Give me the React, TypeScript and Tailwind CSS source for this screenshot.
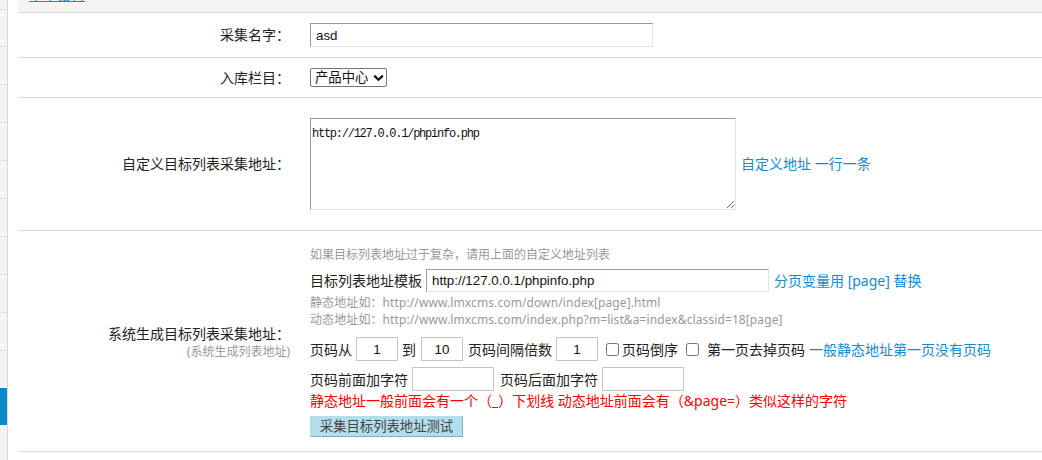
import React from "react";

const inputStrong =
  "border border-t-[#9a9a9a] border-l-[#9a9a9a] border-r-[#e3e3e3] border-b-[#e3e3e3] bg-white outline-none font-['Liberation_Sans',Arial,sans-serif] text-[13.33px] text-[#111]";
const inputLight =
  "border border-[#c4c4c4] bg-white outline-none font-['Liberation_Sans',Arial,sans-serif] text-[13.33px] text-[#111]";

function Sidebar() {
  return (
    <div className="w-[8px] h-full bg-[#f4f4f4] border-r border-[#d9d9d9] flex flex-col shrink-0">
      <div className="h-[10px] border-b border-[#dcdcdc]" />
      <div className="h-[37px] border-b border-[#dcdcdc]" />
      {[0, 1, 2, 3, 4, 5, 6, 7].map((i) => (
        <div key={i} className="h-[38px] border-b border-[#dcdcdc]" />
      ))}
      <div className="h-[37px]" />
      <div className="h-[37px] bg-[#0a8ac8]" />
    </div>
  );
}

function Label({ children }: { children: React.ReactNode }) {
  return (
    <div className="w-[272px] shrink-0 text-right text-[14px] leading-[20px] text-[#222]">
      {children}
    </div>
  );
}

export default function App() {
  return (
    <div className="w-[1042px] h-[460px] overflow-hidden bg-white flex font-['Noto_Sans','Noto_Sans_CJK_SC',sans-serif]">
      <Sidebar />
      <div className="flex-1 ml-[10px] flex flex-col">
        {/* header strip */}
        <div className="h-[13px] bg-[#f4f4f4] border-b border-[#dcdcdc] overflow-hidden">
          <div className="ml-[11px] -mt-[12px] text-[14px] leading-[14px] text-[#158ad0] underline">
            基本设置
          </div>
        </div>

        {/* row 1 */}
        <div className="h-[45px] border-b border-[#dcdcdc] flex items-center">
          <Label>采集名字：</Label>
          <div className="pl-[20px] flex items-center">
            <input
              readOnly
              value="asd"
              className={`${inputStrong} w-[343px] h-[24px] px-[5px]`}
            />
          </div>
        </div>

        {/* row 2 */}
        <div className="h-[40px] border-b border-[#dcdcdc] flex items-center">
          <Label>入库栏目：</Label>
          <div className="pl-[20px] flex items-center">
            <div className="w-[77px] h-[19px] border border-[#767676] rounded-[2px] flex items-center pl-[4px] text-[13.33px] leading-[17px] text-[#111]">
              <span>产品中心</span>
              <svg width="11" height="8" viewBox="0 0 11 8" className="ml-[5px]">
                <path d="M1.2 1.6 L5.5 5.8 L9.8 1.6" fill="none" stroke="#111" strokeWidth="2.2" />
              </svg>
            </div>
          </div>
        </div>

        {/* row 3 */}
        <div className="h-[133px] border-b border-[#dcdcdc] flex items-center">
          <Label>自定义目标列表采集地址：</Label>
          <div className="pl-[20px] flex items-center">
            <textarea
              readOnly
              value="http://127.0.0.1/phpinfo.php"
              className="w-[426px] h-[92px] border border-t-[#9a9a9a] border-l-[#9a9a9a] border-r-[#e3e3e3] border-b-[#e3e3e3] bg-white outline-none pt-[7px] pl-[1px] font-['Liberation_Mono','Courier_New',monospace] text-[12px] leading-[16px] tracking-[-1.25px] text-[#111]"
            />
            <span className="ml-[5px] text-[14px] leading-[20px] text-[#158ad0]">
              自定义地址 一行一条
            </span>
          </div>
        </div>

        {/* row 4 */}
        <div className="h-[221px] border-b border-[#dcdcdc] flex">
          <div className="w-[272px] shrink-0 flex flex-col justify-center items-end pt-[2px]">
            <div className="text-[14px] leading-[19px] text-[#222]">系统生成目标列表采集地址：</div>
            <div className="text-[12px] leading-[17px] text-[#999]">(系统生成列表地址)</div>
          </div>
          <div className="pl-[20px] pt-[14px] flex flex-col items-start text-[#222]">
            <div className="text-[12px] leading-[20px] text-[#999]">
              如果目标列表地址过于复杂，请用上面的自定义地址列表
            </div>
            <div className="mt-[4px] h-[23px] flex items-center text-[14px]">
              <span>目标列表地址模板</span>
              <input
                readOnly
                value="http://127.0.0.1/phpinfo.php"
                className={`${inputStrong} ml-[4px] w-[343px] h-[23px] px-[5px]`}
              />
              <span className="ml-[5px] text-[#158ad0]">分页变量用 [page] 替换</span>
            </div>
            <div className="mt-[2px] text-[12px] leading-[17px] text-[#999] tracking-[0.1px]">
              静态地址如：http://www.lmxcms.com/down/index[page].html
            </div>
            <div className="text-[12px] leading-[17px] text-[#999] tracking-[0.1px]">
              动态地址如：http://www.lmxcms.com/index.php?m=list&amp;a=index&amp;classid=18[page]
            </div>
            <div className="mt-[9px] h-[24px] flex items-center text-[14px]">
              <span>页码从</span>
              <input readOnly value="1" className={`${inputLight} ml-[4px] w-[42px] h-[24px] text-center`} />
              <span className="ml-[4px]">到</span>
              <input readOnly value="10" className={`${inputLight} ml-[5px] w-[42px] h-[24px] text-center`} />
              <span className="ml-[5px]">页码间隔倍数</span>
              <input readOnly value="1" className={`${inputLight} ml-[4px] w-[42px] h-[24px] text-center`} />
              <input type="checkbox" className="ml-[8px] m-0 w-[13px] h-[13px]" />
              <span className="ml-[3px]">页码倒序</span>
              <input type="checkbox" className="ml-[8px] m-0 w-[13px] h-[13px]" />
              <span className="ml-[8px]">第一页去掉页码</span>
              <span className="ml-[4px] text-[#158ad0]">一般静态地址第一页没有页码</span>
            </div>
            <div className="mt-[6px] h-[24px] flex items-center text-[14px]">
              <span>页码前面加字符</span>
              <input readOnly value="" className={`${inputLight} ml-[4px] w-[82px] h-[24px]`} />
              <span className="ml-[6px]">页码后面加字符</span>
              <input readOnly value="" className={`${inputLight} ml-[4px] w-[82px] h-[24px]`} />
            </div>
            <div className="text-[14px] leading-[20px] text-[#ff0000]">
              静态地址一般前面会有一个（_）下划线 动态地址前面会有（&amp;page=）类似这样的字符
            </div>
            <button
              type="button"
              className="mt-[5px] h-[21px] w-[153px] bg-[#b3dfea] border border-[#b3dfea] border-b-[#7fb0c2] border-r-[#7fb0c2] text-[13.33px] leading-[19px] text-[#444] text-center"
            >
              采集目标列表地址测试
            </button>
          </div>
        </div>
      </div>
    </div>
  );
}
